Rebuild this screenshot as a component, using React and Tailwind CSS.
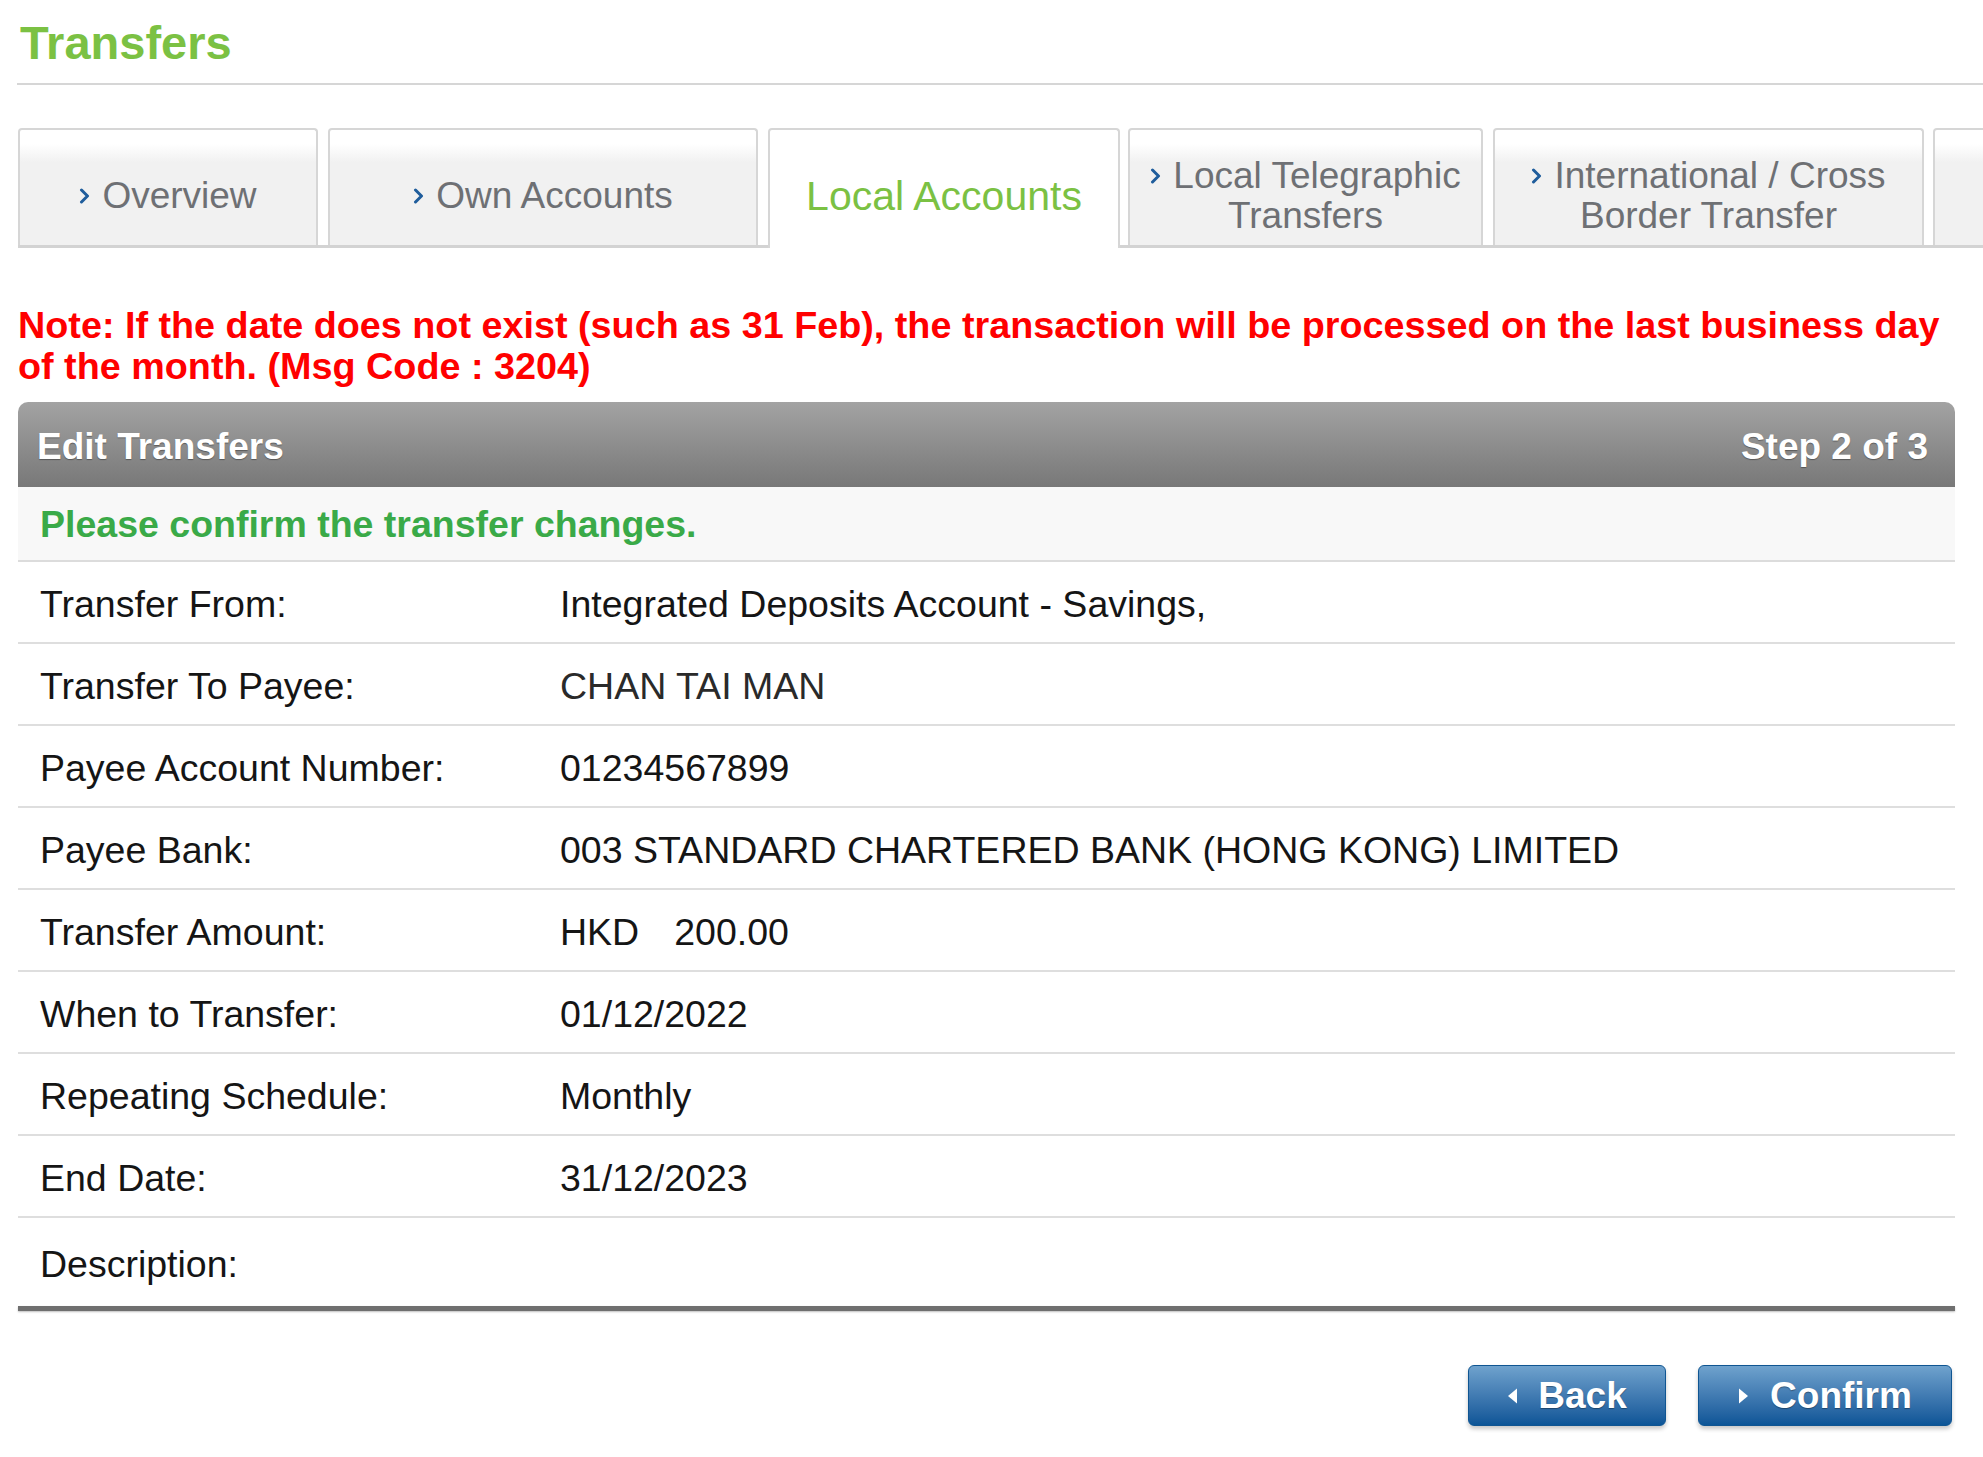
import React from "react";

const Chevron = () => (
  <svg width="11" height="17" viewBox="0 0 11 17" className="inline-block align-middle mr-[12px] -mt-[4px]">
    <polyline points="2.5,3 8.5,9 2.5,15" fill="none" stroke="#1f5d9c" strokeWidth="3" strokeLinecap="round" strokeLinejoin="round" />
  </svg>
);

function Tab({ w, ml, children }) {
  return (
    <div
      className={`${w} ${ml} h-[117px] shrink-0 flex items-center justify-center pt-[16px] rounded-t-[4px] border-t-2 border-x-2 border-[#d6d6d6] bg-linear-to-b from-white from-[12%] to-[#f1f1f1] to-[28%] text-center text-[37px] leading-[40px] text-[#6e7074]`}
    >
      <div>{children}</div>
    </div>
  );
}

function Row({ label, value, last }) {
  return (
    <div className={`flex items-center pt-[4px] ${last ? "h-[88px]" : "h-[82px] border-b-2 border-[#dedede]"}`}>
      <div className="w-[542px] pl-[22px] shrink-0 text-[#151515]">{label}</div>
      <div className="text-[#151515]">{value}</div>
    </div>
  );
}

function Tri({ dir }) {
  return (
    <svg width="11" height="18" viewBox="0 0 11 18" className="shrink-0">
      {dir === "left" ? (
        <polygon points="10,1.5 1,9 10,16.5" fill="white" />
      ) : (
        <polygon points="1,1.5 10,9 1,16.5" fill="white" />
      )}
    </svg>
  );
}

export default function App() {
  return (
    <div className="w-[1983px] h-[1457px] overflow-hidden bg-white font-['Liberation_Sans',Arial,sans-serif]">
      <div className="pl-[18px]">
        <h1 className="pt-[16px] pl-[2px] text-[47px] leading-[54px] font-bold text-[#7bc143]">Transfers</h1>
        <div className="mt-[13px] h-[2px] bg-[#d6d6d6] -ml-[1px]" />

        <div className="mt-[43px] flex items-end border-b-[3px] border-[#d3d3d3]">
          <Tab w="w-[300px]" ml="">
            <Chevron />Overview
          </Tab>
          <Tab w="w-[430px]" ml="ml-[10px]">
            <Chevron />Own Accounts
          </Tab>
          <div className="ml-[10px] w-[352px] h-[120px] -mb-[3px] shrink-0 flex items-center justify-center pt-[14px] rounded-t-[4px] border-t-2 border-x-2 border-[#d6d6d6] bg-white text-[41px] leading-[40px] text-[#7bc143]">
            Local Accounts
          </div>
          <Tab w="w-[355px]" ml="ml-[8px]">
            <Chevron />Local Telegraphic
            <br />
            Transfers
          </Tab>
          <Tab w="w-[431px]" ml="ml-[10px]">
            <Chevron />International / Cross
            <br />
            Border Transfer
          </Tab>
          <Tab w="w-[120px]" ml="ml-[9px]">
            {" "}
          </Tab>
        </div>

        <p className="mt-[57px] w-[1937px] text-[37.75px] leading-[41px] font-bold text-[#ff0000]">
          Note: If the date does not exist (such as 31 Feb), the transaction will be processed on the last business day of the month. (Msg Code : 3204)
        </p>

        <div className="mt-[15px] w-[1937px] text-[37.5px] leading-[44px]">
          <div className="h-[85px] rounded-t-[10px] bg-linear-to-b from-[#a3a3a3] to-[#787878] flex items-center justify-between pl-[19px] pr-[27px] pt-[5px] text-white font-bold text-[37px] [text-shadow:0_1px_1px_rgba(0,0,0,0.35)]">
            <span>Edit Transfers</span>
            <span>Step 2 of 3</span>
          </div>
          <div className="h-[75px] bg-[#f8f8f8] border-b-2 border-[#dcdcdc] flex items-center pl-[22px] text-[#3aaa48] font-bold">
            Please confirm the transfer changes.
          </div>
          <Row label="Transfer From:" value="Integrated Deposits Account - Savings," />
          <Row label="Transfer To Payee:" value={<span className="text-[#2a2a2a]">CHAN TAI MAN</span>} />
          <Row label="Payee Account Number:" value="01234567899" />
          <Row label="Payee Bank:" value="003 STANDARD CHARTERED BANK (HONG KONG) LIMITED" />
          <Row
            label="Transfer Amount:"
            value={
              <span>
                HKD<span className="ml-[35px]">200.00</span>
              </span>
            }
          />
          <Row label="When to Transfer:" value="01/12/2022" />
          <Row label="Repeating Schedule:" value="Monthly" />
          <Row label="End Date:" value="31/12/2023" />
          <Row label="Description:" value="" last />
          <div className="h-[5px] bg-[#6f6f6f] shadow-[0_1px_2px_rgba(0,0,0,0.25)]" />

          <div className="mt-[54px] flex justify-end pr-[3px] gap-[32px]">
            <button className="w-[198px] h-[61px] rounded-[6px] border border-[#0f5592] bg-linear-to-b from-[#6fa2cd] to-[#0b5597] shadow-[0_3px_4px_rgba(0,0,0,0.22)] flex items-center justify-center gap-[20px] text-white font-bold text-[37px] [text-shadow:0_1px_1px_rgba(0,0,0,0.35)]">
              <Tri dir="left" />
              <span>Back</span>
            </button>
            <button className="w-[254px] h-[61px] rounded-[6px] border border-[#0f5592] bg-linear-to-b from-[#6fa2cd] to-[#0b5597] shadow-[0_3px_4px_rgba(0,0,0,0.22)] flex items-center justify-center gap-[21px] text-white font-bold text-[37px] [text-shadow:0_1px_1px_rgba(0,0,0,0.35)]">
              <Tri dir="right" />
              <span>Confirm</span>
            </button>
          </div>
        </div>
      </div>
    </div>
  );
}
